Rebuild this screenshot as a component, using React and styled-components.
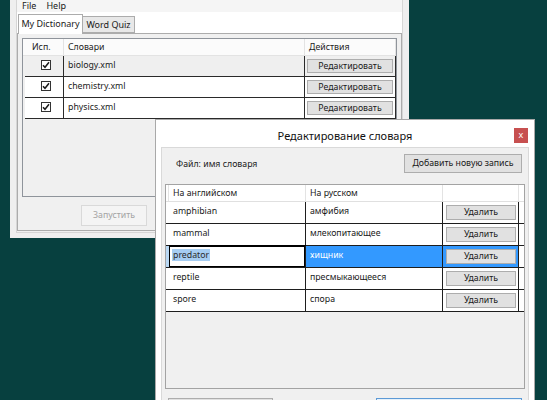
import React from 'react';
import styled, { createGlobalStyle, css } from 'styled-components';

const Global = createGlobalStyle`
  html, body { margin: 0; padding: 0; }
  body {
    background: #07403f;
    font-family: "Noto Sans", "Segoe UI", sans-serif;
    font-size: 8.75px;
    color: #1a1a1a;
  }
  #root { width: 547px; height: 400px; }
  * { box-sizing: border-box; }
`;

const Desktop = styled.div`
  position: relative;
  width: 547px;
  height: 400px;
  overflow: hidden;
  background: #07403f;
`;

/* ---------- generic button ---------- */
const Btn = styled.button`
  font-family: inherit;
  font-size: 8.75px;
  line-height: 1;
  padding: 0;
  margin: 0;
  color: #1a1a1a;
  background: #e1e1e1;
  border: 1px solid #adadad;
  width: ${(p) => p.$w}px;
  height: ${(p) => p.$h}px;
  display: flex;
  align-items: center;
  justify-content: center;
  flex-shrink: 0;
  ${(p) =>
    p.$disabled &&
    css`
      background: #f4f4f4;
      border-color: #d9d9d9;
      color: #a3a3a3;
    `}
  ${(p) =>
    p.$default &&
    css`
      background: #e5f1fb;
      border-color: #5c9ad6;
    `}
`;

/* ---------- main window ---------- */
const MainWindow = styled.div`
  position: absolute;
  left: 10px;
  top: 0;
  width: 399px;
  height: 238px;
  background: #efefef;
  padding: 0 6px 6px 6px;
  display: flex;
  flex-direction: column;
`;

const MainClient = styled.div`
  flex: 1;
  display: flex;
  flex-direction: column;
  background: #f0f0f0;
  border: 1px solid #d6d6d6;
  border-top: none;
`;

const MenuBar = styled.div`
  height: 12px;
  display: flex;
  align-items: center;
  gap: 10px;
  padding-left: 5px;
  background: #f5f5f5;
  font-size: 9px;
  line-height: 12px;
  color: #1a1a1a;
`;

const MenuItem = styled.span`
  display: block;
`;

const TabStrip = styled.div`
  height: 21px;
  display: flex;
  align-items: flex-end;
  padding-left: 1px;
  background: #ffffff;
  position: relative;
  z-index: 1;
`;

const Tab = styled.div`
  height: ${(p) => (p.$active ? 20 : 17)}px;
  width: ${(p) => p.$w}px;
  border: 1px solid #acacac;
  border-bottom: ${(p) => (p.$active ? 'none' : '1px solid #acacac')};
  background: ${(p) => (p.$active ? '#ffffff' : '#e8e8e8')};
  margin-bottom: ${(p) => (p.$active ? -1 : 0)}px;
  margin-left: ${(p) => (p.$active ? 0 : -1)}px;
  font-size: 9px;
  display: flex;
  align-items: center;
  justify-content: center;
  padding-bottom: ${(p) => (p.$active ? 2 : 0)}px;
  color: #1a1a1a;
`;

const TabPanel = styled.div`
  flex: 1;
  margin: 0 0 1px 0;
  border: 1px solid #acacac;
  background: #f0f0f0;
  padding: 4px;
  display: flex;
  flex-direction: column;
`;

const ListView = styled.div`
  height: 159px;
  border: 1px solid #8f949b;
  background: #f0f0f0;
  display: flex;
  flex-direction: column;
`;

const ListHeader = styled.div`
  display: grid;
  grid-template-columns: 41px 241px 1fr;
  height: 17px;
  background: #fbfbfb;
  border-bottom: 1px solid #e3e3e3;
`;

const HeaderCell = styled.div`
  display: flex;
  align-items: center;
  padding-left: ${(p) => p.$pl ?? 4}px;
  border-right: 1px solid #e3e3e3;
  color: #222;
  white-space: nowrap;
`;

const ListRow = styled.div`
  display: grid;
  grid-template-columns: 39px 241px 1fr;
  height: 21px;
  margin-left: 2px;
  border-bottom: 1px solid #2a2a2a;
  background: ${(p) => (p.$shade ? '#efefef' : '#ffffff')};
`;

const ListCell = styled.div`
  display: flex;
  align-items: ${(p) => (p.$top ? 'flex-start' : 'center')};
  justify-content: ${(p) => (p.$center ? 'center' : 'flex-start')};
  padding: ${(p) => (p.$top ? '3px 0 0 2px' : '0 0 3px 4px')};
  border-right: 1px solid #2a2a2a;
  white-space: nowrap;
`;

const CheckBox = styled.span`
  width: 10px;
  height: 10px;
  border: 1px solid #333;
  background: #fff;
  display: flex;
  align-items: center;
  justify-content: center;
  margin-left: 0;
  margin-bottom: 0;
`;

const MainFooter = styled.div`
  display: flex;
  padding: 8px 0 0 59px;
`;

/* ---------- dialog ---------- */
const Dialog = styled.div`
  position: absolute;
  left: 155px;
  top: 119px;
  width: 380px;
  height: 320px;
  background: #ffffff;
  border: 1px solid #a9a9a9;
  display: flex;
  flex-direction: column;
  z-index: 5;
`;

const TitleBar = styled.div`
  height: 27px;
  display: grid;
  grid-template-columns: 1fr auto 1fr;
  align-items: start;
  padding: 8px 6px 0 6px;
`;

const Title = styled.div`
  grid-column: 2;
  font-size: 11px;
  line-height: 15px;
  color: #111;
  white-space: nowrap;
`;

const CloseBtn = styled.div`
  grid-column: 3;
  justify-self: end;
  width: 14px;
  height: 15px;
  background: #c75050;
  color: #fff;
  font-size: 9px;
  line-height: 13px;
  text-align: center;
`;

const DialogClient = styled.div`
  flex: 1;
  margin: 0 5px;
  background: #f0f0f0;
  border: 1px solid #d9d9d9;
  padding: 0 3px;
  display: flex;
  flex-direction: column;
`;

const DialogTop = styled.div`
  display: flex;
  align-items: center;
  justify-content: space-between;
  padding: 6px 3px 11px 11px;
`;

const FileLabel = styled.span`
  color: #1a1a1a;
`;

const DataGrid = styled.div`
  height: 205px;
  border: 1px solid #a3a3a3;
  background: #f0f0f0;
  display: flex;
  flex-direction: column;
`;

const cols = '3px 137px 137px 76px 1fr';

const GridHeader = styled.div`
  display: grid;
  grid-template-columns: ${cols};
  height: 17px;
  background: #ffffff;
  border-bottom: 1px solid #e0e0e0;
`;

const GridHeaderCell = styled.div`
  display: flex;
  align-items: center;
  padding-left: ${(p) => (p.$bare ? 0 : 4)}px;
  border-right: ${(p) => (p.$last ? 'none' : '1px solid #e3e3e3')};
  color: #1a1a1a;
  white-space: nowrap;
`;

const GridRow = styled.div`
  display: grid;
  grid-template-columns: ${cols};
  height: 22px;
  border-bottom: 1px solid #1e1e1e;
  background: #ffffff;
`;

const RowHead = styled.div`
  background: ${(p) => (p.$sel ? '#b9d8f4' : '#ffffff')};
`;

const GridCell = styled.div`
  display: flex;
  align-items: flex-start;
  padding: ${(p) => (p.$btn ? '3px 0 0 3px' : '3px 0 0 4px')};
  border-right: ${(p) => (p.$noline ? 'none' : '1px solid #1e1e1e')};
  white-space: nowrap;
  overflow: hidden;
  background: ${(p) => (p.$sel ? '#3399ff' : 'transparent')};
  color: ${(p) => (p.$sel ? '#ffffff' : '#1a1a1a')};
  ${(p) =>
    p.$edit &&
    css`
      box-shadow: inset 0 0 0 1px #000, 0 -1px 0 #000;
      padding-left: 3px;
    `}
`;

const Selection = styled.span`
  background: #a6cdf2;
  color: #2b2b2b;
  padding: 0 1px;
`;

const DialogFooter = styled.div`
  display: flex;
  justify-content: space-between;
  padding: 9px 3px 0 3px;
`;

const Check = () => (
  <svg width="8" height="8" viewBox="0 0 8 8">
    <path d="M1 4.2 L3 6.3 L7 1.3" fill="none" stroke="#1a1a1a" strokeWidth="1.5" />
  </svg>
);

const dictionaries = ['biology.xml', 'chemistry.xml', 'physics.xml'];

const words = [
  ['amphibian', 'амфибия'],
  ['mammal', 'млекопитающее'],
  ['predator', 'хищник'],
  ['reptile', 'пресмыкающееся'],
  ['spore', 'спора'],
];

export default function App() {
  return (
    <Desktop>
      <Global />
      <MainWindow>
        <MainClient>
          <MenuBar>
            <MenuItem>File</MenuItem>
            <MenuItem>Help</MenuItem>
          </MenuBar>
          <TabStrip>
            <Tab $active $w={65}>My Dictionary</Tab>
            <Tab $w={53}>Word Quiz</Tab>
          </TabStrip>
          <TabPanel>
            <ListView>
              <ListHeader>
                <HeaderCell $pl={9}>Исп.</HeaderCell>
                <HeaderCell>Словари</HeaderCell>
                <HeaderCell>Действия</HeaderCell>
              </ListHeader>
              {dictionaries.map((d, i) => (
                <ListRow key={d} $shade={i === 0}>
                  <ListCell $center>
                    <CheckBox>
                      <Check />
                    </CheckBox>
                  </ListCell>
                  <ListCell>{d}</ListCell>
                  <ListCell $top>
                    <Btn $w={86} $h={14}>Редактировать</Btn>
                  </ListCell>
                </ListRow>
              ))}
            </ListView>
            <MainFooter>
              <Btn $disabled $w={66} $h={21}>Запустить</Btn>
            </MainFooter>
          </TabPanel>
        </MainClient>
      </MainWindow>

      <Dialog>
        <TitleBar>
          <Title>Редактирование словаря</Title>
          <CloseBtn>x</CloseBtn>
        </TitleBar>
        <DialogClient>
          <DialogTop>
            <FileLabel>Файл: имя словаря</FileLabel>
            <Btn $w={118} $h={19}>Добавить новую запись</Btn>
          </DialogTop>
          <DataGrid>
            <GridHeader>
              <GridHeaderCell $bare />
              <GridHeaderCell>На английском</GridHeaderCell>
              <GridHeaderCell>На русском</GridHeaderCell>
              <GridHeaderCell />
              <GridHeaderCell $last />
            </GridHeader>
            {words.map(([en, ru]) => {
              const sel = en === 'predator';
              return (
                <GridRow key={en}>
                  <RowHead $sel={sel} />
                  <GridCell $edit={sel}>
                    {sel ? <Selection>{en}</Selection> : en}
                  </GridCell>
                  <GridCell $sel={sel}>{ru}</GridCell>
                  <GridCell $sel={sel} $btn>
                    <Btn $w={70} $h={15}>Удалить</Btn>
                  </GridCell>
                  <GridCell $noline />
                </GridRow>
              );
            })}
          </DataGrid>
          <DialogFooter>
            <Btn $w={105} $h={22} aria-label="OK" />
            <Btn $default $w={146} $h={22} aria-label="Cancel" />
          </DialogFooter>
        </DialogClient>
      </Dialog>
    </Desktop>
  );
}
